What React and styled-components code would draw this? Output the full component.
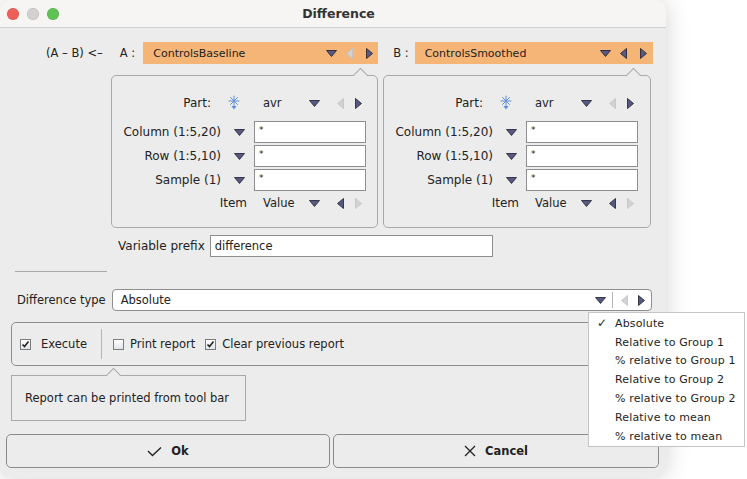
import React from 'react';
import styled, { createGlobalStyle } from 'styled-components';

const GlobalStyle = createGlobalStyle`
  html, body {
    margin: 0;
    padding: 0;
    background: #ffffff;
    font-family: "DejaVu Sans", "Liberation Sans", sans-serif;
    font-size: 11.5px;
    color: #222;
  }
`;

const Page = styled.div`
  position: relative;
  width: 747px;
  height: 479px;
  overflow: hidden;
  background: #fff;
`;

const Window = styled.div`
  width: 666px;
  height: 478px;
  background: #ececec;
  border-radius: 10px;
  box-shadow: 0 0 24px rgba(0, 0, 0, 0.18);
  overflow: hidden;
  display: flex;
  flex-direction: column;
`;

const TitleBar = styled.div`
  height: 27px;
  flex: none;
  background: #f6f5f3;
  border-bottom: 1px solid #cfcfcf;
  display: flex;
  align-items: center;
`;

const Lights = styled.div`
  display: flex;
  gap: 8px;
  padding-left: 7px;
`;

const Light = styled.span`
  width: 12px;
  height: 12px;
  border-radius: 50%;
  background: ${(p) => p.color};
  box-shadow: inset 0 0 0 0.5px rgba(0, 0, 0, 0.15);
`;

const Title = styled.div`
  flex: 1;
  text-align: center;
  font-weight: bold;
  font-size: 12.5px;
  color: #333;
  margin-right: 48px;
`;

const Body = styled.div`
  flex: 1;
  display: flex;
  flex-direction: column;
  padding-top: 14px;
`;

const SourceRow = styled.div`
  display: flex;
  align-items: center;
  height: 22px;
`;

const Plain = styled.span`
  white-space: nowrap;
  margin-left: ${(p) => p.ml || 0}px;
  font-size: ${(p) => p.fs || 11.5}px;
  flex: none;
`;

const OrangeCombo = styled.div`
  width: ${(p) => p.w}px;
  margin-left: ${(p) => p.ml}px;
  height: 22px;
  background: #f5b576;
  display: flex;
  align-items: center;
  padding-left: 10px;
  box-sizing: border-box;
  font-size: 11px;
`;

const ComboText = styled.span`
  flex: 1;
`;

const ArrowSlot = styled.span`
  width: ${(p) => p.w || 20}px;
  margin-left: ${(p) => p.ml || 0}px;
  display: flex;
  justify-content: center;
  align-items: center;
  flex: none;
`;

const PanelRow = styled.div`
  display: flex;
  margin-top: 11px;
  margin-left: 111px;
  gap: 5px;
`;

const Panel = styled.div`
  position: relative;
  width: ${(p) => p.w}px;
  height: 153px;
  box-sizing: border-box;
  border: 1px solid #a9a9a9;
  border-radius: 5px;
  padding-top: 17px;

  &::before {
    content: '';
    position: absolute;
    top: -6px;
    right: 11px;
    width: 10px;
    height: 10px;
    background: #ececec;
    border-left: 1px solid #a9a9a9;
    border-top: 1px solid #a9a9a9;
    transform: rotate(45deg);
  }
`;

const SelectRow = styled.div`
  display: flex;
  align-items: center;
  height: 20px;
  margin-top: ${(p) => p.mt || 0}px;
`;

const SelectLead = styled.div`
  width: 151px;
  display: flex;
  align-items: center;
  justify-content: flex-end;
  padding-right: ${(p) => p.pr}px;
  box-sizing: border-box;
  gap: 17px;
  flex: none;
`;

const SelectValue = styled.span`
  width: 44px;
  flex: none;
`;

const FieldRow = styled.div`
  display: flex;
  align-items: center;
  height: 22px;
  margin-top: ${(p) => p.mt || 0}px;
`;

const FieldLabel = styled.span`
  width: 109px;
  text-align: right;
  flex: none;
  white-space: nowrap;
  font-size: 12px;
`;

const TextBox = styled.div`
  width: ${(p) => p.w}px;
  height: 22px;
  box-sizing: border-box;
  background: #fff;
  border: 1px solid #8e8e8e;
  padding: 2px 4px;
  font-size: ${(p) => p.fs || 9}px;
  line-height: ${(p) => (p.fs ? '16px' : '12px')};
  margin-left: ${(p) => p.ml || 0}px;
  flex: none;
`;

const PrefixRow = styled.div`
  display: flex;
  align-items: center;
  margin-top: 7px;
  margin-left: 118px;
  gap: 5px;
`;

const Separator = styled.div`
  width: 92px;
  height: 1px;
  background: #a9a9a9;
  margin: 14px 0 0 15px;
`;

const TypeRow = styled.div`
  display: flex;
  align-items: center;
  margin-top: 17px;
  margin-left: 17px;
`;

const TypeCombo = styled.div`
  width: 540px;
  height: 22px;
  margin-left: 6px;
  box-sizing: border-box;
  border: 1px solid #8e8e8e;
  border-radius: 4px;
  background: #fff;
  display: flex;
  align-items: center;
  padding-left: 8px;
`;

const VSep = styled.span`
  width: 1px;
  height: ${(p) => p.h}px;
  background: #b5b5b5;
  margin-left: ${(p) => p.ml || 0}px;
  margin-right: ${(p) => p.mr || 0}px;
  flex: none;
`;

const OptionsBox = styled.div`
  margin: 11px 0 0 11px;
  width: 640px;
  height: 44px;
  box-sizing: border-box;
  border: 1px solid #8e8e8e;
  border-radius: 5px;
  display: flex;
  align-items: center;
  padding-left: 8px;
`;

const Check = styled.label`
  display: flex;
  align-items: center;
  gap: ${(p) => p.gap || 6}px;
  white-space: nowrap;
  margin-right: ${(p) => p.mr || 0}px;
`;

const Box = styled.span`
  width: 11px;
  height: 11px;
  box-sizing: border-box;
  border: 1px solid #7b7b7b;
  background: linear-gradient(#ffffff, #dfe3ea);
  display: flex;
  align-items: center;
  justify-content: center;
  flex: none;
`;

const Tooltip = styled.div`
  position: relative;
  margin: 9px 0 0 11px;
  width: 235px;
  height: 46px;
  box-sizing: border-box;
  border: 1px solid #a9a9a9;
  display: flex;
  align-items: center;
  padding-left: 13px;

  &::before {
    content: '';
    position: absolute;
    top: -6px;
    left: 96px;
    width: 10px;
    height: 10px;
    background: #ececec;
    border-left: 1px solid #a9a9a9;
    border-top: 1px solid #a9a9a9;
    transform: rotate(45deg);
  }
`;

const ButtonRow = styled.div`
  display: flex;
  gap: 3px;
  margin: 13px 0 0 6px;
`;

const Button = styled.button`
  width: ${(p) => p.w}px;
  height: 34px;
  border: 1px solid #8a8a8a;
  border-radius: 5px;
  background: #ececec;
  display: flex;
  align-items: center;
  justify-content: center;
  gap: 9px;
  font-family: "DejaVu Sans", sans-serif;
  font-weight: bold;
  font-size: 11.5px;
  color: #222;
  padding: 0;
`;

const Menu = styled.div`
  position: absolute;
  left: 588px;
  top: 312px;
  width: 157px;
  height: 135px;
  box-sizing: border-box;
  background: #fff;
  border: 1px solid #c4c4c4;
  padding-top: 1px;
`;

const MenuItem = styled.div`
  height: 18.8px;
  display: flex;
  align-items: center;
  font-size: 11px;
  letter-spacing: 0.15px;
  color: #1e1e1e;
`;

const Tick = styled.span`
  width: 26px;
  padding-left: 8px;
  box-sizing: border-box;
  flex: none;
  font-size: 12px;
`;

const Arrow = ({ dir, off }) => {
  const fill = off ? '#d3d3d3' : '#575a80';
  const stroke = off ? '#c2c2c2' : '#1c1c2c';
  if (dir === 'down') {
    return (
      <svg width="11" height="7" viewBox="0 0 11 7">
        <polygon points="0.5,0.5 10.5,0.5 5.5,6.5" fill={fill} stroke={stroke} strokeWidth="0.8" />
      </svg>
    );
  }
  const pts = dir === 'left' ? '6.5,0.5 6.5,10.5 0.5,5.5' : '0.5,0.5 0.5,10.5 6.5,5.5';
  return (
    <svg width="7" height="11" viewBox="0 0 7 11">
      <polygon points={pts} fill={fill} stroke={stroke} strokeWidth="0.8" />
    </svg>
  );
};

const StarIcon = () => (
  <svg width="12" height="16" viewBox="0 0 12 16">
    <g stroke="#5f8fd6" strokeWidth="1" strokeLinecap="round">
      <line x1="6" y1="1" x2="6" y2="11" />
      <line x1="1" y1="6" x2="11" y2="6" />
      <line x1="2.5" y1="2.5" x2="9.5" y2="9.5" />
      <line x1="9.5" y1="2.5" x2="2.5" y2="9.5" />
    </g>
    <polygon points="3.5,11 8.5,11 6,14.5" fill="#5f8fd6" />
  </svg>
);

const TickMark = () => (
  <svg width="9" height="8" viewBox="0 0 9 8">
    <path d="M1.5 4.5 L3.5 6.5 L7.5 1.5" fill="none" stroke="#222" strokeWidth="1.6" />
  </svg>
);

const OkIcon = () => (
  <svg width="15" height="11" viewBox="0 0 15 11">
    <path d="M1 5 L5.5 9.5 L14 1.5" fill="none" stroke="#222" strokeWidth="1.4" />
  </svg>
);

const CancelIcon = () => (
  <svg width="12" height="12" viewBox="0 0 12 12">
    <path d="M1 1 L11 11 M11 1 L1 11" fill="none" stroke="#222" strokeWidth="1.3" />
  </svg>
);

const fields = ['Column (1:5,20)', 'Row (1:5,10)', 'Sample (1)'];

const SelectionPanel = ({ w }) => (
  <Panel w={w}>
    <SelectRow>
      <SelectLead pr={23}>
        <Plain fs={12}>Part:</Plain>
        <StarIcon />
      </SelectLead>
      <SelectValue>avr</SelectValue>
      <ArrowSlot w={14}><Arrow dir="down" /></ArrowSlot>
      <ArrowSlot w={20} ml={9}><Arrow dir="left" off /></ArrowSlot>
      <ArrowSlot w={16}><Arrow dir="right" /></ArrowSlot>
    </SelectRow>
    {fields.map((f, i) => (
      <FieldRow key={f} mt={i === 0 ? 8 : 2}>
        <FieldLabel>{f}</FieldLabel>
        <ArrowSlot w={36}><Arrow dir="down" /></ArrowSlot>
        <TextBox w={112} ml={-3}>*</TextBox>
      </FieldRow>
    ))}
    <SelectRow mt={2}>
      <SelectLead pr={16}>
        <Plain fs={12}>Item</Plain>
      </SelectLead>
      <SelectValue>Value</SelectValue>
      <ArrowSlot w={14}><Arrow dir="down" /></ArrowSlot>
      <ArrowSlot w={20} ml={9}><Arrow dir="left" /></ArrowSlot>
      <ArrowSlot w={16}><Arrow dir="right" off /></ArrowSlot>
    </SelectRow>
  </Panel>
);

const menuItems = [
  'Absolute',
  'Relative to Group 1',
  '% relative to Group 1',
  'Relative to Group 2',
  '% relative to Group 2',
  'Relative to mean',
  '% relative to mean',
];

export default function App() {
  return (
    <Page>
      <GlobalStyle />
      <Window>
        <TitleBar>
          <Lights>
            <Light color="#ee5f57" />
            <Light color="#d2d1cf" />
            <Light color="#5fc354" />
          </Lights>
          <Title>Difference</Title>
        </TitleBar>
        <Body>
          <SourceRow>
            <Plain ml={46}>(A – B) &lt;–</Plain>
            <Plain ml={17}>A :</Plain>
            <OrangeCombo w={235} ml={8}>
              <ComboText>ControlsBaseline</ComboText>
              <ArrowSlot w={14}><Arrow dir="down" /></ArrowSlot>
              <ArrowSlot w={22}><Arrow dir="left" off /></ArrowSlot>
              <ArrowSlot w={18}><Arrow dir="right" /></ArrowSlot>
            </OrangeCombo>
            <Plain ml={15}>B :</Plain>
            <OrangeCombo w={238} ml={6}>
              <ComboText>ControlsSmoothed</ComboText>
              <ArrowSlot w={14}><Arrow dir="down" /></ArrowSlot>
              <ArrowSlot w={22}><Arrow dir="left" /></ArrowSlot>
              <ArrowSlot w={18}><Arrow dir="right" /></ArrowSlot>
            </OrangeCombo>
          </SourceRow>
          <PanelRow>
            <SelectionPanel w={267} />
            <SelectionPanel w={268} />
          </PanelRow>
          <PrefixRow>
            <Plain fs={12}>Variable prefix</Plain>
            <TextBox w={283} fs={11.5}>difference</TextBox>
          </PrefixRow>
          <Separator />
          <TypeRow>
            <Plain>Difference type</Plain>
            <TypeCombo>
              <ComboText>Absolute</ComboText>
              <ArrowSlot w={14}><Arrow dir="down" /></ArrowSlot>
              <VSep h={16} ml={4} mr={4} />
              <ArrowSlot w={16}><Arrow dir="left" off /></ArrowSlot>
              <ArrowSlot w={18}><Arrow dir="right" /></ArrowSlot>
            </TypeCombo>
          </TypeRow>
          <OptionsBox>
            <Check gap={10}>
              <Box><TickMark /></Box>
              Execute
            </Check>
            <VSep h={30} ml={14} mr={11} />
            <Check mr={10}>
              <Box />
              Print report
            </Check>
            <Check>
              <Box><TickMark /></Box>
              Clear previous report
            </Check>
          </OptionsBox>
          <Tooltip>Report can be printed from tool bar</Tooltip>
          <ButtonRow>
            <Button w={324}>
              <OkIcon />
              Ok
            </Button>
            <Button w={326}>
              <CancelIcon />
              Cancel
            </Button>
          </ButtonRow>
        </Body>
      </Window>
      <Menu>
        {menuItems.map((m, i) => (
          <MenuItem key={m}>
            <Tick>{i === 0 ? '✓' : ''}</Tick>
            {m}
          </MenuItem>
        ))}
      </Menu>
    </Page>
  );
}
